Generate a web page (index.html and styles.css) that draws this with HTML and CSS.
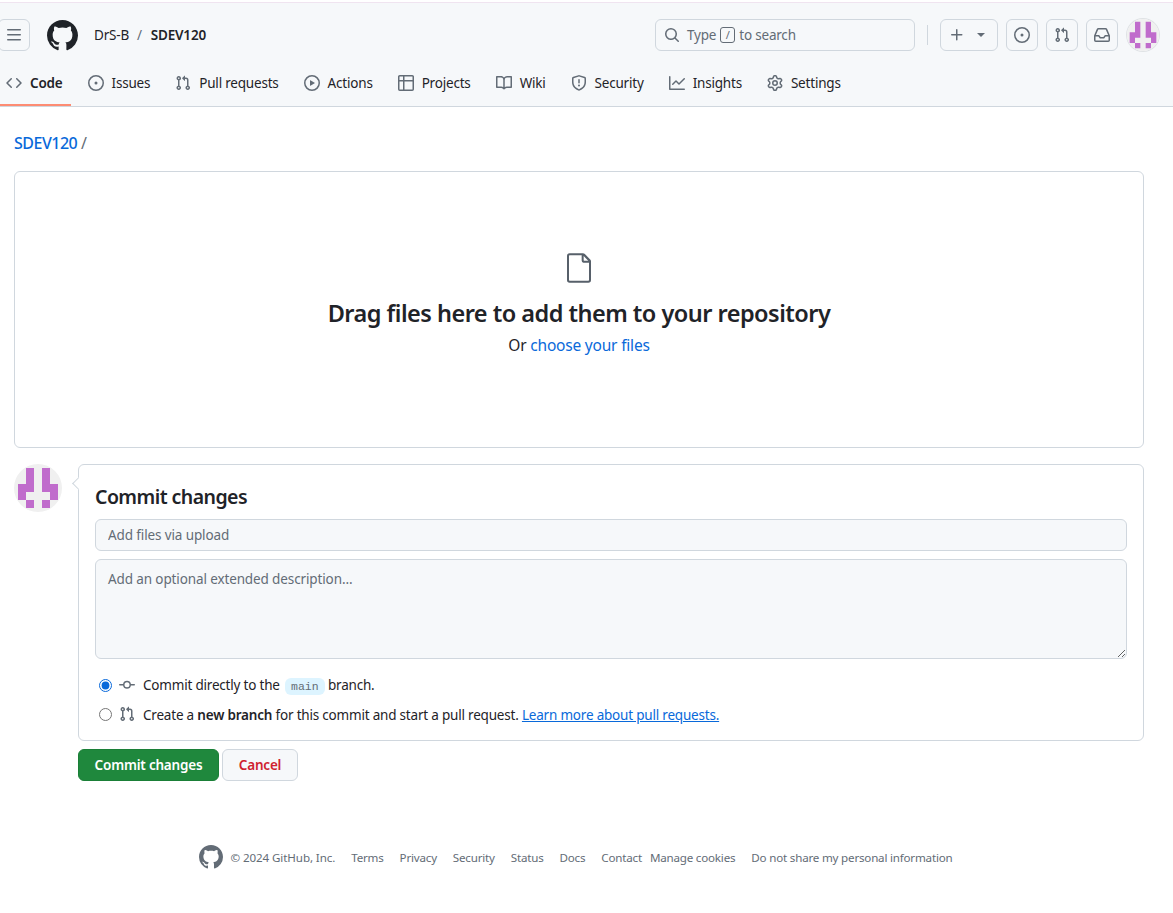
FILE: index.html
```html
<!DOCTYPE html>
<html lang="en">
<head>
<meta charset="utf-8">
<title>Upload files</title>
<link rel="stylesheet" href="styles.css">
</head>
<body>
<svg class="defs" width="0" height="0" aria-hidden="true">
  <symbol id="i-mark" viewBox="0 0 16 16"><path d="M8 0c4.42 0 8 3.58 8 8a8.013 8.013 0 0 1-5.45 7.59c-.4.08-.55-.17-.55-.38 0-.27.01-1.13.01-2.2 0-.75-.25-1.23-.54-1.48 1.78-.2 3.65-.88 3.65-3.95 0-.88-.31-1.59-.82-2.15.08-.2.36-1.02-.08-2.12 0 0-.67-.22-2.2.82-.64-.18-1.32-.27-2-.27-.68 0-1.36.09-2 .27-1.53-1.03-2.2-.82-2.2-.82-.44 1.1-.16 1.92-.08 2.12-.51.56-.82 1.28-.82 2.15 0 3.06 1.86 3.75 3.64 3.95-.23.2-.44.55-.51 1.07-.46.21-1.61.55-2.33-.66-.15-.24-.6-.83-1.23-.82-.67.01-.27.38.01.53.34.19.73.9.82 1.13.16.45.68 1.31 2.69.94 0 .67.01 1.3.01 1.49 0 .21-.15.45-.55.38A7.995 7.995 0 0 1 0 8c0-4.42 3.58-8 8-8Z"/></symbol>
  <symbol id="i-code" viewBox="0 0 16 16"><path d="m11.28 3.22 4.25 4.25a.75.75 0 0 1 0 1.06l-4.25 4.25a.749.749 0 0 1-1.275-.326.749.749 0 0 1 .215-.734L13.94 8l-3.72-3.72a.749.749 0 0 1 .326-1.275.749.749 0 0 1 .734.215Zm-6.56 0a.751.751 0 0 1 1.042.018.751.751 0 0 1 .018 1.042L2.06 8l3.72 3.72a.749.749 0 0 1-.326 1.275.749.749 0 0 1-.734-.215L.47 8.53a.75.75 0 0 1 0-1.06Z"/></symbol>
  <symbol id="i-issue" viewBox="0 0 16 16"><path d="M8 9.5a1.5 1.5 0 1 0 0-3 1.5 1.5 0 0 0 0 3Z"/><path d="M8 0a8 8 0 1 1 0 16A8 8 0 0 1 8 0ZM1.5 8a6.5 6.5 0 1 0 13 0 6.5 6.5 0 0 0-13 0Z"/></symbol>
  <symbol id="i-pr" viewBox="0 0 16 16"><path d="M1.5 3.25a2.25 2.25 0 1 1 3 2.122v5.256a2.251 2.251 0 1 1-1.5 0V5.372A2.25 2.25 0 0 1 1.5 3.25Zm5.677-.177L9.573.677A.25.25 0 0 1 10 .854V2.5h1A2.5 2.5 0 0 1 13.5 5v5.628a2.251 2.251 0 1 1-1.5 0V5a1 1 0 0 0-1-1h-1v1.646a.25.25 0 0 1-.427.177L7.177 3.427a.25.25 0 0 1 0-.354ZM3.75 2.5a.75.75 0 1 0 0 1.5.75.75 0 0 0 0-1.5Zm0 9.5a.75.75 0 1 0 0 1.5.75.75 0 0 0 0-1.5Zm8.25.75a.75.75 0 1 0 1.5 0 .75.75 0 0 0-1.5 0Z"/></symbol>
  <symbol id="i-play" viewBox="0 0 16 16"><path d="M8 0a8 8 0 1 1 0 16A8 8 0 0 1 8 0ZM1.5 8a6.5 6.5 0 1 0 13 0 6.5 6.5 0 0 0-13 0Zm4.879-2.773 4.264 2.559a.25.25 0 0 1 0 .428l-4.264 2.559A.25.25 0 0 1 6 10.559V5.442a.25.25 0 0 1 .379-.215Z"/></symbol>
  <symbol id="i-table" viewBox="0 0 16 16"><path d="M0 1.75C0 .784.784 0 1.75 0h12.5C15.216 0 16 .784 16 1.75v12.5A1.75 1.75 0 0 1 14.25 16H1.75A1.75 1.75 0 0 1 0 14.25ZM6.5 6.5v8h7.75a.25.25 0 0 0 .25-.25V6.5Zm8-1.5V1.75a.25.25 0 0 0-.25-.25H6.5V5Zm-13 1.5v7.75c0 .138.112.25.25.25H5v-8ZM5 5V1.5H1.75a.25.25 0 0 0-.25.25V5Z"/></symbol>
  <symbol id="i-book" viewBox="0 0 16 16"><path d="M0 1.75A.75.75 0 0 1 .75 1h4.253c1.227 0 2.317.59 3 1.501A3.743 3.743 0 0 1 11.006 1h4.245a.75.75 0 0 1 .75.75v10.5a.75.75 0 0 1-.75.75h-4.507a2.25 2.25 0 0 0-1.591.659l-.622.621a.75.75 0 0 1-1.06 0l-.622-.621A2.25 2.25 0 0 0 5.258 13H.75a.75.75 0 0 1-.75-.75Zm7.251 10.324.004-5.073-.002-2.253A2.25 2.25 0 0 0 5.003 2.5H1.5v9h3.757a3.75 3.75 0 0 1 1.994.574ZM8.755 4.75l-.004 7.322a3.752 3.752 0 0 1 1.992-.572H14.5v-9h-3.495a2.25 2.25 0 0 0-2.25 2.25Z"/></symbol>
  <symbol id="i-shield" viewBox="0 0 16 16"><path d="M7.467.133a1.748 1.748 0 0 1 1.066 0l5.25 1.68A1.75 1.75 0 0 1 15 3.48V7c0 1.566-.32 3.182-1.303 4.682-.983 1.498-2.585 2.813-5.032 3.855a1.697 1.697 0 0 1-1.33 0c-2.447-1.042-4.049-2.357-5.032-3.855C1.32 10.182 1 8.566 1 7V3.48a1.75 1.75 0 0 1 1.217-1.667Zm.61 1.429a.25.25 0 0 0-.153 0l-5.25 1.68a.25.25 0 0 0-.174.238V7c0 1.358.275 2.666 1.057 3.86.784 1.194 2.121 2.34 4.366 3.297a.196.196 0 0 0 .154 0c2.245-.956 3.582-2.104 4.366-3.298C13.225 9.666 13.5 8.36 13.5 7V3.48a.251.251 0 0 0-.174-.237l-5.25-1.68ZM8.75 4.75v3a.75.75 0 0 1-1.5 0v-3a.75.75 0 0 1 1.5 0ZM9 10.5a1 1 0 1 1-2 0 1 1 0 0 1 2 0Z"/></symbol>
  <symbol id="i-graph" viewBox="0 0 16 16"><path d="M1.5 1.75V13.5h13.75a.75.75 0 0 1 0 1.5H.75a.75.75 0 0 1-.75-.75V1.75a.75.75 0 0 1 1.5 0Zm14.28 2.53-5.25 5.25a.75.75 0 0 1-1.06 0L7 7.06 4.28 9.78a.751.751 0 0 1-1.042-.018.751.751 0 0 1-.018-1.042l3.25-3.25a.75.75 0 0 1 1.06 0L10 7.94l4.72-4.72a.751.751 0 0 1 1.042.018.751.751 0 0 1 .018 1.042Z"/></symbol>
  <symbol id="i-gear" viewBox="0 0 16 16"><path d="M8 0a8.2 8.2 0 0 1 .701.031C9.444.095 9.99.645 10.16 1.29l.288 1.107c.018.066.079.158.212.224.231.114.454.243.668.386.123.082.233.09.299.071l1.103-.303c.644-.176 1.392.021 1.82.63.27.385.506.792.704 1.218.315.675.111 1.422-.364 1.891l-.814.806c-.049.048-.098.147-.088.294.016.257.016.515 0 .772-.01.147.038.246.088.294l.814.806c.475.469.679 1.216.364 1.891a7.977 7.977 0 0 1-.704 1.217c-.428.61-1.176.807-1.82.63l-1.102-.302c-.067-.019-.177-.011-.3.071a5.909 5.909 0 0 1-.668.386c-.133.066-.194.158-.211.224l-.29 1.106c-.168.646-.715 1.196-1.458 1.26a8.006 8.006 0 0 1-1.402 0c-.743-.064-1.289-.614-1.458-1.26l-.289-1.106c-.018-.066-.079-.158-.212-.224a5.738 5.738 0 0 1-.668-.386c-.123-.082-.233-.09-.299-.071l-1.103.303c-.644.176-1.392-.021-1.82-.63a8.12 8.12 0 0 1-.704-1.218c-.315-.675-.111-1.422.363-1.891l.815-.806c.05-.048.098-.147.088-.294a6.214 6.214 0 0 1 0-.772c.01-.147-.038-.246-.088-.294l-.815-.806C.635 6.045.431 5.298.746 4.623a7.92 7.92 0 0 1 .704-1.217c.428-.61 1.176-.807 1.82-.63l1.102.302c.067.019.177.011.3-.071.214-.143.437-.272.668-.386.133-.066.194-.158.211-.224l.29-1.106C6.009.645 6.556.095 7.299.03 7.53.01 7.764 0 8 0Zm-.571 1.525c-.036.003-.108.036-.137.146l-.289 1.105c-.147.561-.549.967-.998 1.189-.173.086-.34.183-.5.29-.417.278-.97.423-1.529.27l-1.103-.303c-.109-.03-.175.016-.195.045-.22.312-.412.644-.573.99-.014.031-.021.11.059.19l.815.806c.411.406.562.957.53 1.456a4.709 4.709 0 0 0 0 .582c.032.499-.119 1.05-.53 1.456l-.815.806c-.081.08-.073.159-.059.19.162.346.353.677.573.989.02.03.085.076.195.046l1.102-.303c.56-.153 1.113-.008 1.53.27.161.107.328.204.501.29.447.222.85.629.997 1.189l.289 1.105c.029.109.101.143.137.146a6.6 6.6 0 0 0 1.142 0c.036-.003.108-.036.137-.146l.289-1.105c.147-.561.549-.967.998-1.189.173-.086.34-.183.5-.29.417-.278.97-.423 1.529-.27l1.103.303c.109.029.175-.016.195-.045.22-.313.411-.644.573-.99.014-.031.021-.11-.059-.19l-.815-.806c-.411-.406-.562-.957-.53-1.456a4.709 4.709 0 0 0 0-.582c-.032-.499.119-1.05.53-1.456l.815-.806c.081-.08.073-.159.059-.19a6.464 6.464 0 0 0-.573-.989c-.02-.03-.085-.076-.195-.046l-1.102.303c-.56.153-1.113.008-1.53-.27a4.44 4.44 0 0 0-.501-.29c-.447-.222-.85-.629-.997-1.189l-.289-1.105c-.029-.11-.101-.143-.137-.146a6.6 6.6 0 0 0-1.142 0ZM11 8a3 3 0 1 1-6 0 3 3 0 0 1 6 0ZM9.5 8a1.5 1.5 0 1 0-3.001.001A1.5 1.5 0 0 0 9.5 8Z"/></symbol>
  <symbol id="i-search" viewBox="0 0 16 16"><path d="M10.68 11.74a6 6 0 0 1-7.922-8.982 6 6 0 0 1 8.982 7.922l3.04 3.04a.749.749 0 0 1-.326 1.275.749.749 0 0 1-.734-.215ZM11.5 7a4.499 4.499 0 1 0-8.997 0A4.499 4.499 0 0 0 11.5 7Z"/></symbol>
  <symbol id="i-plus" viewBox="0 0 16 16"><path d="M7.75 2a.75.75 0 0 1 .75.75V7h4.25a.75.75 0 0 1 0 1.5H8.5v4.25a.75.75 0 0 1-1.5 0V8.5H2.75a.75.75 0 0 1 0-1.5H7V2.75A.75.75 0 0 1 7.75 2Z"/></symbol>
  <symbol id="i-bars" viewBox="0 0 16 16"><path d="M1 2.75A.75.75 0 0 1 1.75 2h12.5a.75.75 0 0 1 0 1.5H1.75A.75.75 0 0 1 1 2.75Zm0 5A.75.75 0 0 1 1.75 7h12.5a.75.75 0 0 1 0 1.5H1.75A.75.75 0 0 1 1 7.75ZM1.75 12h12.5a.75.75 0 0 1 0 1.5H1.75a.75.75 0 0 1 0-1.5Z"/></symbol>
  <symbol id="i-inbox" viewBox="0 0 16 16"><path d="M2.8 2.06A1.75 1.75 0 0 1 4.41 1h7.18c.7 0 1.333.417 1.61 1.06l2.74 6.395c.04.093.06.194.06.295v4.5A1.75 1.75 0 0 1 14.25 15H1.75A1.75 1.75 0 0 1 0 13.25v-4.5c0-.101.02-.202.06-.295Zm1.61.44a.25.25 0 0 0-.23.152L1.887 8H4.75a.75.75 0 0 1 .6.3L6.625 10h2.75l1.275-1.7a.75.75 0 0 1 .6-.3h2.863L11.82 2.652a.25.25 0 0 0-.23-.152Zm10.09 7h-2.875l-1.275 1.7a.75.75 0 0 1-.6.3h-3.5a.75.75 0 0 1-.6-.3L4.375 9.5H1.5v3.75c0 .138.112.25.25.25h12.5a.25.25 0 0 0 .25-.25Z"/></symbol>
  <symbol id="i-commit" viewBox="0 0 16 16"><path d="M11.93 8.5a4.002 4.002 0 0 1-7.86 0H.75a.75.75 0 0 1 0-1.5h3.32a4.002 4.002 0 0 1 7.86 0h3.32a.75.75 0 0 1 0 1.5Zm-1.43-.75a2.5 2.5 0 1 0-5 0 2.5 2.5 0 0 0 5 0Z"/></symbol>
  <symbol id="i-file" viewBox="0 0 24 24"><path d="M5 2.5a.5.5 0 0 0-.5.5v18a.5.5 0 0 0 .5.5h14a.5.5 0 0 0 .5-.5V8h-4.25A1.75 1.75 0 0 1 14 6.25V2.5Zm10.5.56v3.19c0 .138.112.25.25.25h3.19ZM3 3a2 2 0 0 1 2-2h9.982a2 2 0 0 1 1.414.586l4.018 4.018A2 2 0 0 1 21 7.018V21a2 2 0 0 1-2 2H5a2 2 0 0 1-2-2Z"/></symbol>
  <symbol id="i-identicon" viewBox="0 0 48 48"><rect width="48" height="48" fill="#f0f0f0"/><path fill="#c06ccc" d="M12 4h8v24h-8zM4 20h8v16H4zM28 4h8v24h-8zM36 20h8v16h-8zM12 36h8v8h-8zM28 36h8v8h-8z"/></symbol>
</svg>

<header class="app-header">
  <div class="top-row">
    <button class="icon-btn menu-btn" type="button"><svg class="ic"><use href="#i-bars"/></svg></button>
    <svg class="logo"><use href="#i-mark"/></svg>
    <nav class="crumbs"><span>DrS-B</span><span class="sep">/</span><strong>SDEV120</strong></nav>
    <div class="search">
      <svg class="ic"><use href="#i-search"/></svg>
      <span>Type</span><kbd>/</kbd><span>to search</span>
    </div>
    <span class="divider"></span>
    <button class="icon-btn plus-btn" type="button"><svg class="ic"><use href="#i-plus"/></svg><span class="caret"></span></button>
    <button class="icon-btn" type="button"><svg class="ic"><use href="#i-issue"/></svg></button>
    <button class="icon-btn" type="button"><svg class="ic"><use href="#i-pr"/></svg></button>
    <button class="icon-btn" type="button"><svg class="ic"><use href="#i-inbox"/></svg></button>
    <svg class="avatar-small"><use href="#i-identicon"/></svg>
  </div>
  <nav class="tabs">
    <a class="tab active"><svg class="ic"><use href="#i-code"/></svg><span>Code</span></a>
    <a class="tab"><svg class="ic"><use href="#i-issue"/></svg><span>Issues</span></a>
    <a class="tab"><svg class="ic"><use href="#i-pr"/></svg><span>Pull requests</span></a>
    <a class="tab"><svg class="ic"><use href="#i-play"/></svg><span>Actions</span></a>
    <a class="tab"><svg class="ic"><use href="#i-table"/></svg><span>Projects</span></a>
    <a class="tab"><svg class="ic"><use href="#i-book"/></svg><span>Wiki</span></a>
    <a class="tab"><svg class="ic"><use href="#i-shield"/></svg><span>Security</span></a>
    <a class="tab"><svg class="ic"><use href="#i-graph"/></svg><span>Insights</span></a>
    <a class="tab"><svg class="ic"><use href="#i-gear"/></svg><span>Settings</span></a>
  </nav>
</header>

<main class="page">
  <div class="path"><a class="link path-link">SDEV120</a> <span class="path-sep">/</span></div>
  <section class="dropzone">
    <svg class="file-ic"><use href="#i-file"/></svg>
    <h2>Drag files here to add them to your repository</h2>
    <p>Or <a class="link">choose your files</a></p>
  </section>
  <section class="commit">
    <svg class="avatar-large"><use href="#i-identicon"/></svg>
    <div class="commit-main">
      <div class="commit-box">
        <h3>Commit changes</h3>
        <input class="field" type="text" placeholder="Add files via upload">
        <textarea class="field area" placeholder="Add an optional extended description..."></textarea>
        <label class="choice"><input type="radio" name="branch" checked><svg class="ic"><use href="#i-commit"/></svg><span>Commit directly to the <code>main</code> branch.</span></label>
        <label class="choice"><input type="radio" name="branch"><svg class="ic"><use href="#i-pr"/></svg><span>Create a <strong>new branch</strong> for this commit and start a pull request. <a class="link under">Learn more about pull requests.</a></span></label>
      </div>
      <div class="actions">
        <button class="btn primary" type="button">Commit changes</button>
        <button class="btn cancel" type="button">Cancel</button>
      </div>
    </div>
  </section>
</main>

<footer class="footer">
  <svg class="foot-logo"><use href="#i-mark"/></svg>
  <span class="copy">© 2024 GitHub, Inc.</span>
  <a>Terms</a><a>Privacy</a><a>Security</a><a>Status</a><a>Docs</a><a>Contact</a><a class="tight">Manage cookies</a><a>Do not share my personal information</a>
</footer>
</body>
</html>
```

FILE: styles.css
```css
* { box-sizing: border-box; }
html, body { margin: 0; }
body {
  font-family: "Noto Sans", "Open Sans", "Liberation Sans", sans-serif;
  font-size: 13.5px;
  letter-spacing: -0.2px;
  line-height: 20px;
  color: #1f2328;
  background: #fff;
  overflow: hidden;
  padding-top: 2px;
}
.defs { position: absolute; }
.ic { width: 16px; height: 16px; fill: #636c76; flex: none; display: block; }
.link { color: #0969da; }
.app-header {
  background: #f6f8fa;
  border-top: 1px solid #f0e4f0;
  border-bottom: 1px solid #d0d7de;
  height: 105px;
}
.top-row { display: flex; align-items: center; height: 63px; padding: 1px 14px 0 0; }
.icon-btn {
  width: 32px; height: 32px; padding: 0;
  border: 1px solid #d0d7de; border-radius: 6px; background: transparent;
  display: flex; align-items: center; justify-content: center;
  margin-left: 8px;
}
.menu-btn { margin-left: -2px; }
.logo { width: 31px; height: 31px; fill: #1f2328; margin-left: 17px; }
.crumbs { display: flex; gap: 8px; margin-left: 16px; color: #1f2328; }
.crumbs .sep { color: #636c76; }
.crumbs strong { font-weight: 600; margin-left: 1px; }
.search {
  margin-left: auto; width: 260px; height: 32px;
  border: 1px solid #d0d7de; border-radius: 6px;
  display: flex; align-items: center; gap: 4px; padding: 0 8px;
  color: #636c76;
}
.search .ic { margin-right: 3px; }
kbd {
  display: inline-flex; align-items: center; justify-content: center;
  width: 15px; height: 16px; border: 1px solid #636c76; border-radius: 3px;
  font: inherit; font-size: 11px;
}
.divider { width: 1px; height: 20px; background: #d0d7de; margin: 0 4px 0 12px; }
.plus-btn { width: 58px; gap: 12px; justify-content: flex-start; padding-left: 8px; }
.caret { width: 0; height: 0; border: 4px solid transparent; border-top-color: #636c76; border-bottom: 0; }
.avatar-small { width: 32px; height: 32px; border-radius: 50%; margin-left: 9px; box-shadow: 0 0 0 1px #dfe2e5; }
.tabs { display: flex; height: 40px; }
.tab {
  display: flex; align-items: center; gap: 8px; height: 40px;
  padding: 0 8px 6px 6px; margin-right: 11px; position: relative; white-space: nowrap;
}
.tab.active { font-weight: 600; }
.tab.active::after {
  content: ""; position: absolute; left: 0; right: 0; bottom: 0; height: 2px; background: #fd8c73;
}
.page { padding: 26px 29px 0 14px; }
.path { height: 20px; font-size: 16px; line-height: 20px; letter-spacing: -0.5px; }
.path-link { font-weight: 500; }
.path-sep { color: #636c76; }
.dropzone {
  margin-top: 18px; height: 277px;
  border: 1px solid #d0d7de; border-radius: 6px;
  display: flex; flex-direction: column; align-items: center; padding-top: 80px;
}
.file-ic { width: 32px; height: 32px; fill: #57606a; }
.dropzone h2 { margin: 11px 0 0; font-size: 23.5px; line-height: 36px; font-weight: 600; letter-spacing: -0.52px; }
.dropzone p { margin: 2px 0 0; font-size: 15.5px; line-height: 24px; }
.commit { display: flex; gap: 16px; margin-top: 16px; }
.avatar-large { width: 48px; height: 48px; border-radius: 50%; flex: none; }
.commit-main { flex: 1; }
.commit-box {
  position: relative; height: 277px; padding: 16px;
  border: 1px solid #d0d7de; border-radius: 6px;
}
.commit-box::before {
  content: ""; position: absolute; left: -5px; top: 14px; width: 8px; height: 8px;
  background: #fff; border-left: 1px solid #d0d7de; border-bottom: 1px solid #d0d7de; transform: rotate(45deg);
}
.commit-box h3 { margin: 0; font-size: 19.5px; line-height: 32px; font-weight: 600; letter-spacing: -0.55px; }
.field {
  display: block; width: 100%; height: 32px; margin-top: 6px; padding: 4px 12px 5px;
  border: 1px solid #d0d7de; border-radius: 6px; background: #f6f8fa;
  font: inherit; letter-spacing: -0.12px; color: #1f2328;
}
.field::placeholder { color: #636c76; opacity: 1; }
.area { height: 100px; margin-top: 8px; padding: 9px 12px; resize: vertical; }
.choice { display: flex; align-items: center; gap: 8px; height: 20px; margin-top: 9px; }
.choice > span { padding-top: 2px; white-space: nowrap; }
.area + .choice { margin-top: 16px; }
.choice input { margin: 0 -1px 0 4px; width: 13px; height: 13px; accent-color: #0969da; flex: none; }
.choice code {
  font-family: "Liberation Mono", "DejaVu Sans Mono", monospace; font-size: 11.5px; letter-spacing: 0; color: #636c76;
  background: #ddf4ff; padding: 2px 6px; border-radius: 6px; margin-left: 2px;
}
.choice strong { font-weight: 600; }
.under { text-decoration: underline; }
.actions { display: flex; gap: 3px; margin-top: 8px; }
.btn { height: 32px; border-radius: 6px; font: inherit; letter-spacing: inherit; font-weight: 600; padding: 0; white-space: nowrap; }
.primary { width: 141px; background: #1f883d; color: #fff; border: 1px solid #1a7f37; }
.cancel { width: 76px; background: #f6f8fa; color: #cf222e; border: 1px solid #d0d7de; }
.footer {
  display: flex; align-items: center; justify-content: center; margin: 64px 0 0 0; padding-right: 22px;
  font-size: 11.6px; line-height: 18px; color: #636c76; gap: 16px;
}
.footer span, .footer a { padding-top: 2px; }
.footer .copy { letter-spacing: -0.1px; }
.foot-logo { width: 24px; height: 24px; fill: #636c76; margin-right: -8px; }
.footer .tight { margin-left: -8px; }
```
